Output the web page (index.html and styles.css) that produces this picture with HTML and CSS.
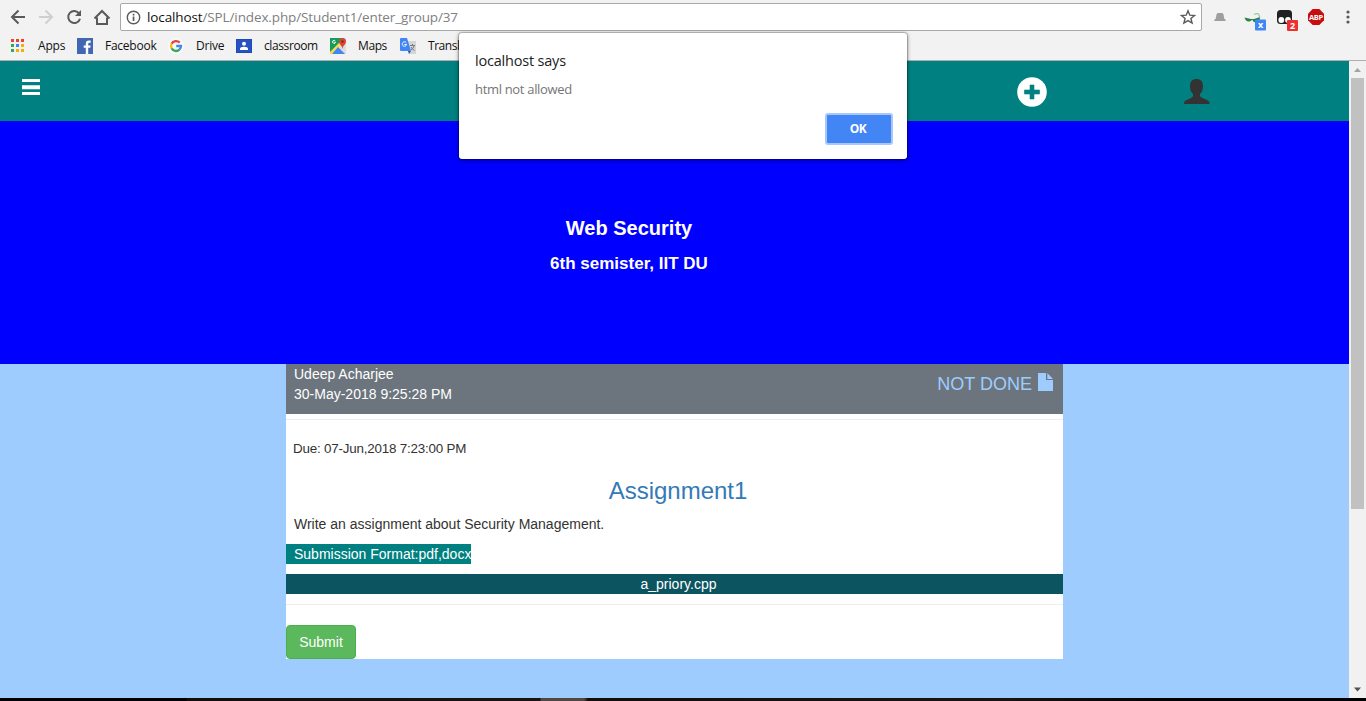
FILE: index.html
```html
<!DOCTYPE html>
<html lang="en">
<head>
<meta charset="utf-8">
<title>Web Security</title>
<link rel="stylesheet" href="styles.css">
</head>
<body>
<div class="window">
  <header class="chrome">
    <div class="toolbar">
      <div class="nav">
        <svg width="16" height="16" viewBox="0 0 16 16" class="stroke"><path d="M15 8H2M8.500 1.500L2 8l6.500 6.500"/></svg>
        <svg width="16" height="16" viewBox="0 0 16 16" class="stroke faded"><path d="M1 8h13M7.500 1.500L14 8l-6.500 6.500"/></svg>
        <svg width="16" height="16" viewBox="0 0 16 16"><path d="M13.200 4.600A6 6 0 1 0 14 9.700" fill="none" stroke="#5a5a5a" stroke-width="2"/><path d="M15 1v6H9z" fill="#5a5a5a"/></svg>
        <svg class="home stroke" width="18" height="17" viewBox="0 0 18 17"><path d="M1.500 9.500L9 2l7.500 7.500M4 8.500V15h10V8.500"/></svg>
      </div>
      <div class="address">
        <svg width="15" height="15" viewBox="0 0 15 15"><circle cx="7.500" cy="7.500" r="6.200" fill="none" stroke="#5a5a5a" stroke-width="1.400"/><path d="M6.700 6.500h1.700V11H6.700zM6.700 3.800h1.700v1.600H6.700z" fill="#5a5a5a"/></svg>
        <span class="url"><b>localhost</b>/SPL/index.php/Student1/enter_group/37</span>
        <svg width="16" height="16" viewBox="0 0 16 16"><path d="M8 1.800l1.800 4.400 4.700.3-3.600 3 1.200 4.600L8 11.600l-4.100 2.500 1.200-4.600-3.600-3 4.700-.3z" fill="none" stroke="#5a5a5a" stroke-width="1.400"/></svg>
      </div>
      <div class="extensions">
        <svg width="12" height="9" viewBox="0 0 12 9"><path d="M2.500 1.500Q2.700 0 4 0h4q1.300 0 1.500 1.500l.8 4.200Q11.800 6 11.800 8H.2q0-2 1.500-2.300z" fill="#9e9e9e"/></svg>
        <svg width="23" height="20" viewBox="0 0 23 20"><path d="M.5 6.500L7 8h3l6-2q0 5-3.200 5.500Q9.500 12 8.500 9l-1 .2Q6 11 4 10.500 1.500 10 .5 6.500z" fill="#26824a"/><path d="M10 3.500q3-1.500 4.500-.5L16 6.500" stroke="#8fcf9b" fill="none" stroke-width="1.200"/><rect x="11" y="8.500" width="11" height="11" rx="1" fill="#4285f4"/><text x="16.500" y="16.500" text-anchor="middle" class="badge">x</text></svg>
        <svg width="22" height="22" viewBox="0 0 22 22"><rect x="0" y="1" width="15" height="14" rx="3.500" fill="#222"/><circle cx="4.300" cy="11" r="2.900" fill="#fff"/><circle cx="11" cy="11" r="2.900" fill="#fff"/><rect x="10" y="11" width="11" height="11" rx="1" fill="#ef3030"/><text x="15.500" y="20" text-anchor="middle" class="badge">2</text></svg>
        <svg width="16" height="16" viewBox="0 0 16 16"><path d="M4.700 0h6.600L16 4.700v6.600L11.300 16H4.700L0 11.300V4.700z" fill="#c70d0d"/><text x="8" y="10.700" text-anchor="middle" class="abp">ABP</text></svg>
        <svg width="4" height="14" viewBox="0 0 4 14" fill="#5a5a5a"><circle cx="2" cy="2" r="1.600"/><circle cx="2" cy="7" r="1.600"/><circle cx="2" cy="12" r="1.600"/></svg>
      </div>
    </div>
    <nav class="bookmarks">
      <svg width="16" height="16" viewBox="0 0 16 16"><path d="M1 1h3v3H1zM6 1h3v3H6zM11 1h3v3h-3z" fill="#ea4335"/><path d="M1 6h3v3H1zM1 11h3v3H1z" fill="#34a853"/><path d="M6 6h3v3H6z" fill="#4285f4"/><path d="M11 6h3v3h-3zM6 11h3v3H6zM11 11h3v3h-3z" fill="#fbab05"/></svg>
      <span>Apps</span>
      <svg width="16" height="16" viewBox="0 0 16 16"><path d="M0 0h16v16H0z" fill="#4267b2"/><path d="M8.800 16V9.800H6.700V7.400h2.100V5.500q0-3 3-3h1.900v2.200h-1.300q-1.200 0-1.200 1.200v1.500h2.500l-.4 2.400h-2.100V16z" fill="#fff"/></svg>
      <span class="wide">Facebook</span>
      <svg width="16" height="16" viewBox="0 0 16 16"><circle cx="8" cy="8" r="8" fill="#fafafa"/><g fill="none" stroke-width="2.300"><path d="M11.700 4.600A5 5 0 0 0 3.600 5.800" stroke="#ea4335"/><path d="M3.600 5.800a5 5 0 0 0 0 4.400" stroke="#fbbc05"/><path d="M3.600 10.200a5 5 0 0 0 7.800 1.500" stroke="#34a853"/><path d="M11.400 11.700A5 5 0 0 0 13 8H8.200" stroke="#4285f4"/></g></svg>
      <span>Drive</span>
      <svg width="16" height="14" viewBox="0 0 16 14"><path d="M0 0h16v14H0z" fill="#1f49b8"/><path d="M1 1h14v12H1z" fill="#2752c4"/><circle cx="8" cy="4.800" r="2" fill="#fff"/><path d="M4 11V9.700q0-2 4-2t4 2V11z" fill="#fff"/></svg>
      <span class="long">classroom</span>
      <svg width="16" height="16" viewBox="0 0 16 16"><rect width="16" height="16" rx="1" fill="#dedede"/><path d="M0 0h14L0 15z" fill="#159c5b"/><path d="M0 14L11 3l2 2L2 16H0z" fill="#ffda45"/><path d="M2 16l6-7 7 7z" fill="#4385f5"/><path d="M12.500 0A3.500 3.500 0 0 1 16 3.500c0 3-3 3.500-3.500 7.500C12 7 9 6.500 9 3.500A3.500 3.500 0 0 1 12.500 0z" fill="#db4437"/><circle cx="12.500" cy="3.500" r="1.200" fill="#802b22"/><path d="M5.300 3A1.500 1.500 0 1 0 5.500 4.300H4.200" fill="none" stroke="#fff"/></svg>
      <span class="long">Maps</span>
      <svg class="translate" width="16" height="16" viewBox="0 0 16 16"><path d="M6 3h10v13H9z" fill="#d5d5d5"/><path d="M1 0h6l4 13H1q-1 0-1-1V1q0-1 1-1z" fill="#4285f4"/><path d="M8 13h3l-2 3z" fill="#2452b0"/><path d="M6.200 4.700A2.200 2.200 0 1 0 6.600 6.500H4.500" fill="none" stroke="#fff"/><path d="M10 7.500h5M12.500 6v1.500M11 9q1 2 3.500 3.500M14 8q-1 3-3 4" fill="none" stroke="#727c82"/></svg>
      <span class="translate">Translate</span>
    </nav>
  </header>

  <div class="viewport">
    <main class="page">
      <div class="topbar">
        <svg class="burger" width="18" height="17" viewBox="0 0 18 17"><path d="M0 0h18v3H0zM0 6.200h18v4H0zM0 13h18v3H0z" fill="#fff"/></svg>
        <svg class="plus" width="30" height="30" viewBox="0 0 30 30"><circle cx="15" cy="15" r="14.800" fill="#fff"/><path d="M13 8h4v5h5.500v4H17v5h-4v-5H7.500v-4H13z" fill="#008080" stroke="#008080" stroke-width=".6" stroke-linejoin="round"/></svg>
        <svg class="user" width="26" height="26" viewBox="0 0 26 26"><path d="M12.500 0C16.500 0 19 2.500 19 7c0 4-1 6-3 8v2.200q1 1.200 4 2.500 5.500 2.200 5.500 4V25H0v-1.300q0-1.800 5.500-4 3-1.300 3.500-2.500V15C7 13 6 11 6 7c0-4.500 2.500-7 6.500-7z" fill="#333"/></svg>
      </div>
      <section class="banner">
        <h1>Web Security</h1>
        <h2>6th semister, IIT DU</h2>
      </section>
      <article class="card">
        <div class="card-head">
          <div class="author">Udeep Acharjee<br>30-May-2018 9:25:28 PM</div>
          <div class="status"><span>NOT DONE</span>
            <svg width="15" height="18" viewBox="0 0 15 18"><path d="M0 0h8v7h7v11H0zM9.300 0L15 6H9.300z" fill="#9fccff"/></svg>
          </div>
        </div>
        <hr class="rule-top">
        <p class="due">Due: 07-Jun,2018 7:23:00 PM</p>
        <h3>Assignment1</h3>
        <p class="task">Write an assignment about Security Management.</p>
        <p class="format">Submission Format:pdf,docx</p>
        <p class="file">a_priory.cpp</p>
        <hr class="rule-bottom">
        <button class="submit">Submit</button>
      </article>
    </main>
    <div class="scrollbar">
      <svg width="17" height="17" viewBox="0 0 17 17"><path d="M5 11l3.500-4 3.500 4z" fill="#a3a3a3"/></svg>
      <div class="thumb"></div>
      <svg class="down" width="17" height="17" viewBox="0 0 17 17"><path d="M5 6.500h7l-3.500 4z" fill="#505050"/></svg>
    </div>
  </div>
  <div class="taskbar"></div>

  <div class="dialog">
    <div class="dialog-title">localhost says</div>
    <div class="dialog-text">html not allowed</div>
    <button class="ok">OK</button>
  </div>
</div>
</body>
</html>
```
FILE: styles.css
```css
* { box-sizing: border-box; }
body { margin: 0; font-family: "Liberation Sans", Arial, sans-serif; font-size: 14px; line-height: 20px; color: #333; }
svg { display: block; flex: none; }
p, h1, h2, h3 { margin: 0; }
.window { position: relative; width: 1366px; height: 701px; overflow: hidden; display: flex; flex-direction: column; }

.chrome { height: 61px; background: #f2f2f2; border-bottom: 1px solid #b0aeae; font-family: "Open Sans", "Noto Sans", sans-serif; }
.toolbar { display: flex; align-items: center; height: 34px; }
.nav { display: flex; align-items: center; gap: 12px; width: 120px; padding-left: 10px; }
.home { margin-left: -1px; }
.stroke { fill: none; stroke: #5a5a5a; stroke-width: 2; }
.faded { stroke: #cfcfcf; }
.address { display: flex; align-items: center; gap: 6px; width: 1082px; height: 28px; padding: 0 5px; background: #fff; border: 1px solid #a8a8a8; border-radius: 2px; }
.url { flex: 1; font-size: 13.500px; letter-spacing: -0.120px; color: #808080; white-space: nowrap; }
.url b { font-weight: 400; color: #111; }
.extensions { display: flex; align-items: center; margin-left: 12px; }
.extensions svg { overflow: visible; }
.extensions svg:nth-child(2) { margin: 8px 0 0 18px; }
.extensions svg:nth-child(3) { margin: 6px 0 0 10px; }
.extensions svg:nth-child(4) { margin-left: 9px; }
.extensions svg:nth-child(5) { margin-left: 22px; }
.badge { font: 700 9px "Open Sans", sans-serif; fill: #fff; }
.abp { font: 700 7.500px "Open Sans", sans-serif; letter-spacing: -0.300px; fill: #fff; }
.bookmarks { display: grid; grid-template-columns: 16px 27px 16px 51px 16px 28px 16px 54px 16px 29px 16px 60px; column-gap: 12px; align-items: center; height: 24px; padding-left: 10px; font-size: 12px; letter-spacing: -0.200px; color: #111; white-space: nowrap; }
.bookmarks .long { letter-spacing: -0.400px; }
.bookmarks .wide { letter-spacing: -0.250px; }
.bookmarks .translate { margin-left: 1px; letter-spacing: -0.450px; }

.viewport { display: flex; height: 637px; }
.page { width: 1349px; background: #9fccff; }
.topbar { display: flex; align-items: flex-start; height: 60px; padding-left: 22px; background: #008080; }
.burger { margin-top: 18px; }
.plus { margin: 16px 0 0 977px; }
.user { margin: 18px 0 0 137px; }
.banner { height: 243px; padding: 95px 91px 0 0; background: #0000ff; color: #fff; text-align: center; }
.banner h1 { font-size: 20px; line-height: 24px; }
.banner h2 { margin-top: 14px; font-size: 17px; line-height: 20px; }
.card { width: 777px; height: 295px; margin-left: 286px; background: #fff; }
.card-head { display: flex; justify-content: space-between; height: 50px; padding: 0 10px 0 8px; background: #6c757d; color: #fff; }
.status { display: flex; gap: 6px; padding-top: 10px; font-size: 18px; color: #9fccff; }
.status svg { margin-top: -1px; }
hr { height: 1px; border: 0; background: #eee; }
.rule-top { margin: 5px 0 19px; }
.due { padding-left: 7px; font-size: 13.400px; letter-spacing: -0.200px; }
.card h3 { margin-top: 19px; padding-left: 7px; font-size: 24px; line-height: 26px; font-weight: 400; color: #337ab7; text-align: center; }
.task { margin-top: 10px; padding-left: 8px; }
.format { width: 185px; margin-top: 10px; padding-left: 8px; background: #008080; color: #fff; white-space: nowrap; }
.file { margin-top: 10px; padding-left: 8px; background: #0c545f; color: #fff; text-align: center; }
.rule-bottom { margin: 10px 0 20px; }
.submit { display: block; width: 70px; height: 34px; padding: 0; border: 1px solid #4cae4c; border-radius: 4px; background: #5cb85c; color: #fff; font: 14px "Liberation Sans", Arial, sans-serif; }
.scrollbar { display: flex; flex-direction: column; align-items: center; width: 17px; background: #f1f1f1; }
.thumb { width: 13px; height: 431px; background: #c1c1c1; }
.down { margin-top: auto; }
.taskbar { height: 3px; background: linear-gradient(90deg, #000 186px, #130d09 187px, #1a120e 540px, #504741 541px, #504741 584px, #130d0a 588px, #1a1310 1000px, #000 1180px); }

.dialog { position: absolute; left: 459px; top: 33px; display: flex; flex-direction: column; width: 448px; height: 126px; padding: 18px 14px 14px 16px; background: #fff; border-radius: 3px; box-shadow: 0 0 1px 1px rgba(0,0,0,.2), 0 1px 4px rgba(0,0,0,.5); font-family: "Open Sans", "Noto Sans", sans-serif; }
.dialog-title { font-size: 14.500px; letter-spacing: -0.200px; color: #222; }
.dialog-text { margin-top: 8px; font-size: 13px; letter-spacing: -0.320px; color: #757575; }
.ok { align-self: flex-end; width: 68px; height: 32px; margin-top: auto; padding: 0 2px 1px 0; border: 2px solid #a9c8fa; border-radius: 3px; background: #4285f4; color: #fff; font: 700 12px "Open Sans", sans-serif; letter-spacing: -0.500px; }
```
